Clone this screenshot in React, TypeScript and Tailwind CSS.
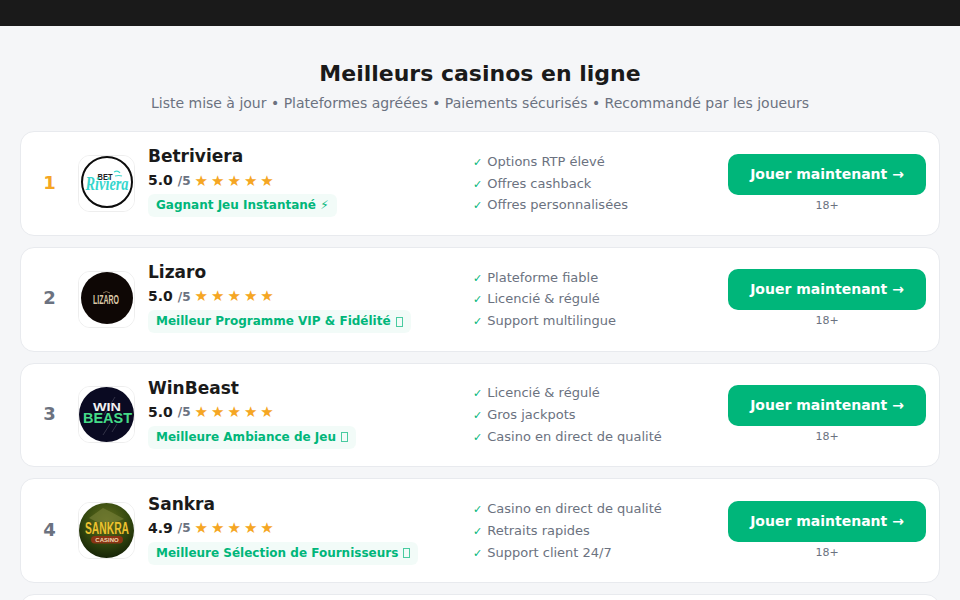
import React from 'react';

const font = { fontFamily: '"DejaVu Sans", sans-serif' };

const BetRiviera = () => (
  <svg viewBox="0 0 55 55" className="w-full h-full">
    <rect width="55" height="55" fill="#fff" />
    <circle cx="28" cy="26" r="25" fill="#fff" stroke="#0c0c0c" strokeWidth="2" />
    <text x="26" y="24" textAnchor="middle" fontSize="9" fontWeight="700" fill="#222" fontFamily="Liberation Sans" textLength="15" lengthAdjust="spacingAndGlyphs">BET</text>
    <path d="M35 16q4-2 6 1M36 20q4-1 7 0" stroke="#3fd8cf" strokeWidth="1.2" fill="none" />
    <text x="28" y="34" textAnchor="middle" fontSize="18" fontWeight="700" fontStyle="italic" fill="#35d6cd" fontFamily="Liberation Serif" textLength="43" lengthAdjust="spacingAndGlyphs">Riviera</text>
  </svg>
);

const Lizaro = () => (
  <svg viewBox="0 0 55 55" className="w-full h-full">
    <rect width="55" height="55" fill="#fff" />
    <circle cx="28" cy="26" r="26" fill="#0e0705" />
    <path d="M24 21q3-3 7 0" stroke="#8a7558" strokeWidth="1" fill="none" />
    <text x="27" y="32" textAnchor="middle" fontSize="13" fontWeight="700" fill="#dcc9a8" fontFamily="Liberation Sans" textLength="26" lengthAdjust="spacingAndGlyphs">LIZARO</text>
  </svg>
);

const WinBeast = () => (
  <svg viewBox="0 0 55 55" className="w-full h-full">
    <rect width="55" height="55" fill="#fff" />
    <circle cx="27.5" cy="27.5" r="27.5" fill="#0a0a22" />
    <path d="M36 10L25 28M31 37L24 48M38 37L33 45" stroke="#343448" strokeWidth="1" />
    <text x="28" y="24" textAnchor="middle" fontSize="11" fontWeight="700" fill="#f1f1f1" fontFamily="Liberation Sans" textLength="28" lengthAdjust="spacingAndGlyphs">WIN</text>
    <text x="28.5" y="36" textAnchor="middle" fontSize="15" fontWeight="700" fill="#45dc88" fontFamily="Liberation Sans" textLength="49" lengthAdjust="spacingAndGlyphs">BEAST</text>
  </svg>
);

const Sankra = () => (
  <svg viewBox="0 0 55 55" className="w-full h-full">
    <defs>
      <radialGradient id="sankraBg" cx="50%" cy="32%" r="68%">
        <stop offset="0%" stopColor="#66701f" />
        <stop offset="60%" stopColor="#33480f" />
        <stop offset="100%" stopColor="#172407" />
      </radialGradient>
    </defs>
    <rect width="55" height="55" fill="#fff" />
    <circle cx="27.5" cy="27.5" r="27.5" fill="url(#sankraBg)" />
    <path d="M10 15L24 5l10 5 11 6-8 3H18z" fill="#727c35" opacity="0.7" />
    <text x="28" y="31" textAnchor="middle" fontSize="16" fontWeight="700" fill="#eec22f" fontFamily="Liberation Sans" textLength="44" lengthAdjust="spacingAndGlyphs">SANKRA</text>
    <rect x="12" y="33" width="32" height="7.5" rx="3.7" fill="#8b3414" />
    <text x="28" y="39" textAnchor="middle" fontSize="6" fontWeight="700" fill="#f0d9b0" fontFamily="Liberation Sans">CASINO</text>
  </svg>
);

const casinos = [
  { name: 'Betriviera', score: '5.0', badge: 'Gagnant Jeu Instantané ⚡', missingGlyph: false, logo: <BetRiviera />, features: ['Options RTP élevé', 'Offres cashback', 'Offres personnalisées'] },
  { name: 'Lizaro', score: '5.0', badge: 'Meilleur Programme VIP & Fidélité', missingGlyph: true, logo: <Lizaro />, features: ['Plateforme fiable', 'Licencié & régulé', 'Support multilingue'] },
  { name: 'WinBeast', score: '5.0', badge: 'Meilleure Ambiance de Jeu', missingGlyph: true, logo: <WinBeast />, features: ['Licencié & régulé', 'Gros jackpots', 'Casino en direct de qualité'] },
  { name: 'Sankra', score: '4.9', badge: 'Meilleure Sélection de Fournisseurs', missingGlyph: true, logo: <Sankra />, features: ['Casino en direct de qualité', 'Retraits rapides', 'Support client 24/7'] },
];

export default function App() {
  return (
    <div className="h-[600px] overflow-hidden bg-[#f5f6f8]" style={font}>
      <div className="h-[26px] bg-[#1a1a1a]" />
      <div className="px-5 pt-[33px]">
        <h1 className="text-[22px] leading-[30px] font-bold text-[#1a1a1a] text-center">Meilleurs casinos en ligne</h1>
        <p className="mt-[2px] text-[14px] leading-[24px] text-[#6b7280] text-center">Liste mise à jour • Plateformes agréées • Paiements sécurisés • Recommandé par les joueurs</p>
        <div className="mt-[16px] flex flex-col gap-[11px]">
          {casinos.map((c, i) => (
            <div key={c.name} className="h-[104.75px] flex items-center bg-white border border-[#e8eaee] rounded-[14px] pl-[14px] pr-[13px]">
              <div className={`w-[29px] pb-[2.5px] text-center text-[18px] font-bold ${i === 0 ? 'text-[#f5a623]' : 'text-[#6b7280]'}`}>{i + 1}</div>
              <div className="ml-[14px] w-[57px] h-[57px] shrink-0 overflow-hidden rounded-[12px] border border-[#eeeeee] bg-white">{c.logo}</div>
              <div className="ml-[13px] w-[325px] shrink-0 pb-[4px]">
                <div className="text-[17px] leading-[22px] font-bold text-[#1a1a1a]">{c.name}</div>
                <div className="mt-[3.5px] flex items-center h-[20px]">
                  <span className="text-[14px] font-bold text-[#1a1a1a]">{c.score}</span>
                  <span className="ml-[5px] text-[12px] font-semibold text-[#6b7280]">/5</span>
                  <span className="ml-[4px] text-[15px] tracking-[3px] text-[#f5a623]">★★★★★</span>
                </div>
                <div className="mt-[3.5px] flex">
                  <span className="flex items-center rounded-[6px] bg-[#00b67a]/[0.05] px-2 py-[3px] text-[12px] leading-[17px] font-bold text-[#00b67a] whitespace-nowrap">
                    {c.badge}
                    {c.missingGlyph && <span className="ml-[5px] w-[7px] h-[10px] border border-[#00b67a]/70" />}
                  </span>
                </div>
              </div>
              <ul className="flex-1 flex flex-col gap-[2.8px] pt-[1.5px]">
                {c.features.map(f => (
                  <li key={f} className="text-[13px] leading-[18px] text-[#6b7280] whitespace-nowrap">
                    <span className="text-[#00b67a] text-[11px] mr-[5px]">✓</span>{f}
                  </li>
                ))}
              </ul>
              <div className="w-[198px] shrink-0 pb-[0.5px] flex flex-col items-center">
                <button className="w-full h-[41px] rounded-[10px] bg-[#00b67a] text-white text-[14px] font-bold">Jouer maintenant →</button>
                <span className="mt-[3px] text-[11px] leading-[15px] text-[#6b7280]">18+</span>
              </div>
            </div>
          ))}
          <div className="h-[104.75px] bg-white border border-[#e8eaee] rounded-[14px]" />
        </div>
      </div>
    </div>
  );
}
